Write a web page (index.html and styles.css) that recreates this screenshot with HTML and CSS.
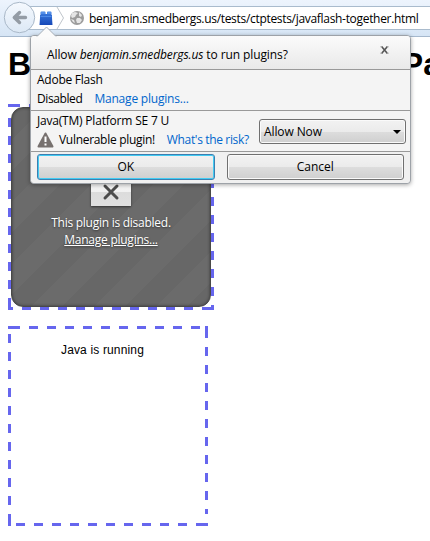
FILE: index.html
```
<!DOCTYPE html>
<html lang="en">
<head>
<meta charset="utf-8">
<title>Plugin permissions</title>
<link rel="stylesheet" href="styles.css">
</head>
<body>
<div class="toolbar">
  <div class="urlbar"><span class="url">benjamin.smedbergs.us/tests/ctptests/javaflash-together.html</span></div>
  <svg class="chrome-icons" width="90" height="37" viewBox="0 0 90 37">
    <defs>
      <linearGradient id="back" x2="0" y2="1"><stop stop-color="#f5f9fe"/><stop offset="1" stop-color="#dce8f5"/></linearGradient>
      <linearGradient id="brick" x2="0" y2="1"><stop stop-color="#3f7fe0"/><stop offset="1" stop-color="#1648b8"/></linearGradient>
    </defs>
    <circle cx="19.500" cy="17.500" r="15.200" fill="url(#back)" stroke="#a9b8c8"/>
    <path d="M19.500 12.500L14.300 17.500L19.500 22.500M15 17.500H25.500" fill="none" stroke="#949ca5" stroke-width="3.400" stroke-linecap="round" stroke-linejoin="round"/>
    <path d="M40.500 15V12.500Q40.500 11.500 41.500 11.500H44.500Q45.500 11.500 45.500 12.500V14H47V12.500Q47 11.500 48 11.500H50.500Q51.500 11.500 51.500 12.500V15H52V18L52.500 25H39.500L40 18V15Z" fill="url(#brick)"/>
    <path d="M41 13H45M47.500 13H51" stroke="#6fa6f4" stroke-width="1"/>
    <path d="M40.500 16.500H51.500" stroke="#4d8ae8" stroke-width="1"/>
    <path d="M57 7L63.500 18L57 29" fill="none" stroke="#bfc5cb"/>
    <circle cx="77" cy="18" r="7" fill="#9c9c9c"/>
    <path d="M72 13L75 12L78 13L76 15L75 17L72 18L71 16ZM79 12L82 15L81 17L79 16ZM77 18L80 18L82 20L80 23L77 23L76 20ZM71 19L74 20L75 23L73 22Z" fill="#e5e5e5"/>
  </svg>
</div>
<main class="page">
  <h1><span>B</span><span class="end">Pa</span></h1>
  <section class="plugin flash">
    <svg class="dashes" width="206" height="206" fill="none" stroke="#6666ee" stroke-width="3">
      <path d="M0 1.500H12M0 204.500H5M1.500 194V206M194 204.500H206M204.500 201V206"/>
      <path stroke-dasharray="9 9" d="M21 1.500H206M1.500 14V194M14 204.500H194M204.500 3V201"/>
    </svg>
    <div class="disabled">
      <div class="xbox"><svg width="18" height="18" viewBox="0 0 18 18"><path d="M3 3L15 15M15 3L3 15" stroke="#4c4c4c" stroke-width="3" stroke-linecap="round"/></svg></div>
      <p><span class="t-disabled">This plugin is disabled.</span></p>
      <p class="manage"><span class="t-manage">Manage plugins...</span></p>
    </div>
  </section>
  <section class="plugin java">
    <svg class="dashes" width="200" height="200" fill="none" stroke="#6666ee" stroke-width="3">
      <path d="M0 1.500H12M198.500 0V12M1.500 188V200M188 198.500H200"/>
      <path stroke-dasharray="9 9" d="M21 1.500H192M198.500 21V188M1.500 8V188M8 198.500H188"/>
    </svg>
    <span class="running">Java is running</span>
  </section>
</main>
<div class="popup">
  <svg class="arrow" width="22" height="11" viewBox="0 0 22 11"><path d="M1 10.500L10.500 1L20 10.500" fill="#fbfbfb" stroke="#a7afb8"/><path d="M2 10.500H19" stroke="#fbfbfb"/></svg>
  <header><span class="ask">Allow <i>benjamin.smedbergs.us</i> to run plugins?</span><svg class="close" width="9" height="8" viewBox="0 0 9 8"><path d="M2 1L7 7M7 1L2 7" stroke="#555" stroke-width="1.600"/><path d="M.5 .8H3M6 .8H8.500M.5 7.200H3M6 7.200H8.500" stroke="#666" stroke-width=".8"/></svg></header>
  <div class="row first">
    <div><span class="adobe">Adobe Flash</span></div>
    <div class="line"><span class="dis">Disabled</span><span class="link mp">Manage plugins...</span></div>
  </div>
  <div class="row second">
    <div class="info">
      <div><span class="jtm">Java(TM) Platform SE 7 U</span></div>
      <div class="line"><svg width="17" height="16" viewBox="0 0 17 16"><path d="M8.500 1.500L15.500 14.500H1.500Z" fill="#77716f" stroke="#77716f" stroke-width="2" stroke-linejoin="round"/><path d="M8.500 4.500V10M8.500 11.500V13.500" stroke="#fff" stroke-width="2"/></svg><span class="vul">Vulnerable plugin!</span><span class="link risk">What's the risk?</span></div>
    </div>
    <div class="select"><span class="allow">Allow Now</span><i class="caret"></i></div>
  </div>
  <footer><div class="btn ok"><span>OK</span></div><div class="btn cancel"><span>Cancel</span></div></footer>
</div>
</body>
</html>
```
FILE: styles.css
```
* { box-sizing: border-box; }
body { margin: 0; width: 430px; height: 541px; overflow: hidden; position: relative; background: #fff; color: #000; font: 12px/16px "Open Sans", "Noto Sans", sans-serif; }
span { white-space: nowrap; }
p { margin: 0; }
.toolbar { position: relative; height: 37px; padding-top: 6px; background: linear-gradient(#edf4fd, #d6e5f5); border-bottom: 1px solid #a5b8cd; }
.urlbar { margin-left: 20px; height: 24px; padding-left: 69px; background: #fff; border: solid #a9bbcd; border-width: 1px 0; line-height: 23px; }
.url { letter-spacing: -.31px; }
.chrome-icons { position: absolute; left: 0; top: 0; }
.page { padding: 7px 8px; }
h1 { margin: 0; height: 40px; font: bold 32px/40px "Liberation Sans", Arial, sans-serif; display: flex; justify-content: space-between; }
.end { margin-right: -19px; }
.plugin { position: relative; }
.dashes { position: absolute; left: 0; top: 0; }
.flash { margin-top: 20px; width: 206px; height: 206px; padding: 3px; }
.disabled { position: relative; height: 200px; border-radius: 12px; border: 1px solid #494949; box-shadow: inset 0 0 3px #333; background: repeating-linear-gradient(135deg, #676767 0 22px, #6b6b6b 22px 44px); color: #fff; text-align: center; padding-top: 58px; text-shadow: 0 1px 2px #333; }
.xbox { width: 40px; height: 40px; margin: 0 auto 9px; background: linear-gradient(#fff 20%, #f0f0f0 66%, #dcdcdc 66%, #e0e0e0); display: flex; align-items: flex-end; justify-content: center; padding-bottom: 5px; box-shadow: 0 1px 2px #333; }
.disabled p { height: 17px; }
.t-disabled { letter-spacing: -.26px; }
.t-manage { letter-spacing: -.25px; }
.manage { text-decoration: underline; }
.java { margin-top: 16px; width: 200px; height: 200px; padding: 16px 0 0 53px; font: 12px/16px "Liberation Sans", Arial, sans-serif; letter-spacing: .15px; }
.popup { position: absolute; left: 30px; top: 35px; width: 381px; height: 149px; background: #f4f4f4; border: 1px solid #9da2a8; border-radius: 4px; box-shadow: 0 1px 4px rgba(0,0,0,.35); }
.arrow { position: absolute; left: 5px; top: -10px; }
header { height: 34px; padding: 11px 21px 0 16px; display: flex; justify-content: space-between; background: linear-gradient(#fbfbfb, #e9e9e9); border-bottom: 1px solid #999; border-radius: 3px 3px 0 0; }
.ask { letter-spacing: -.1px; }
.close { margin-top: -1px; }
.row { height: 41px; border-bottom: 1px solid #999; padding-left: 6px; }
.first { padding-top: 2px; }
.line { display: flex; align-items: center; }
.first .line { margin-top: 3px; }
.second { display: flex; }
.info { width: 222px; padding-top: 2px; }
.info .line { margin-top: 3px; }
.adobe { letter-spacing: -.25px; }
.dis { letter-spacing: -.4px; }
.jtm { letter-spacing: -.2px; }
.link { color: #0066cc; }
.mp { margin-left: 12px; letter-spacing: -.2px; }
.vul { margin-left: 5px; letter-spacing: -.3px; }
.risk { margin-left: 12px; letter-spacing: -.35px; }
.select { width: 147px; height: 25px; margin-top: 8px; border: 1px solid #707070; border-radius: 3px; box-shadow: inset 0 0 0 1px #fafafa; background: linear-gradient(#f2f2f2, #ebebeb 50%, #dddddd 50%, #cfcfcf); display: flex; align-items: center; justify-content: space-between; padding: 0 4px; }
.allow { letter-spacing: -.1px; }
.caret { border: 4px solid transparent; border-top-color: #000; border-bottom: 0; }
footer { display: flex; gap: 12px; padding: 2px 6px; height: 31px; background: #f0f0f0; border-radius: 0 0 4px 4px; }
.btn { width: 178px; height: 26px; border: 1px solid #707070; border-radius: 3px; box-shadow: inset 0 0 0 1px #fafafa; background: linear-gradient(#f2f2f2, #ebebeb 50%, #dddddd 50%, #cfcfcf); text-align: center; line-height: 24px; }
.ok { border-color: #3c7fb1; box-shadow: inset 0 0 0 1px #43cbf2; }
```
